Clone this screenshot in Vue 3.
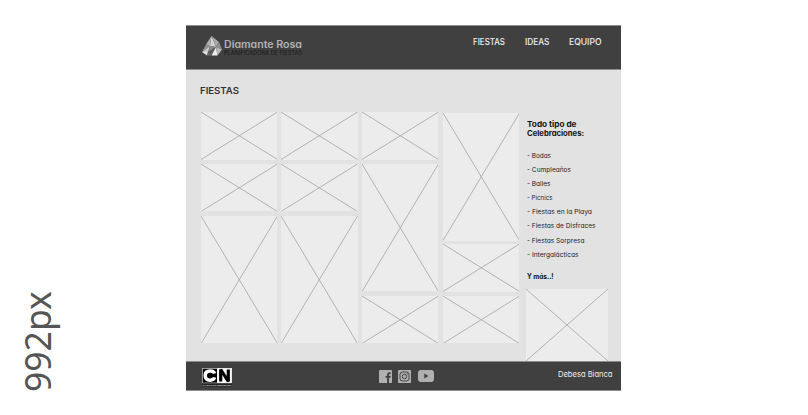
<script setup>
import { h } from 'vue'

// A single line of text fitted to a given width.
const FitText = (props) =>
  h('svg', { class: 'fit', width: props.w, height: props.lh }, [
    h(
      'text',
      { x: 0, y: props.base, textLength: props.w, lengthAdjust: 'spacingAndGlyphs' },
      props.t
    )
  ])
FitText.props = ['t', 'w', 'lh', 'base']

const nav = [
  { t: 'FIESTAS', w: 32 },
  { t: 'IDEAS', w: 24.5 },
  { t: 'EQUIPO', w: 32.5 }
]

const columns = [
  ['short', 'short', 'tall'],
  ['short', 'short', 'tall'],
  ['short', 'tall', 'short'],
  ['tall', 'short', 'short']
]

const items = [
  { t: '- Bodas', w: 24 },
  { t: '- Cumpleaños', w: 44 },
  { t: '- Bailes', w: 23.5 },
  { t: '- Picnics', w: 25.5 },
  { t: '- Fiestas en la Playa', w: 65 },
  { t: '- Fiestas de Disfraces', w: 68.5 },
  { t: '- Fiestas Sorpresa', w: 57.5 },
  { t: '- Intergalácticas', w: 51.5 }
]
</script>

<template>
  <div class="board">
    <div class="size">992px</div>
    <div class="page">
      <header class="header">
        <div class="brand">
          <svg class="gem" width="20" height="20" viewBox="0 0 20 20">
            <path d="M9.500 0 4 8.500 8 10Z" fill="#b0b0b0" />
            <path d="M9.500 0 8 10 14 11Z" fill="#d2d2d2" />
            <path d="M9.500 0 17 6 14 11Z" fill="#a8a8a8" />
            <path d="M4 8.500 0 16 8 10Z" fill="#929292" />
            <path d="M8 10 0 16 6 16Z" fill="#c9c9c9" />
            <path d="M0 16 6 16 5 19.500Z" fill="#e4e4e4" />
            <path d="M8 10 6 16 14 11Z" fill="#8a8a8a" />
            <path d="M6 16 5 19.500 9.500 19.500Z" fill="#6c6c6c" />
            <path d="M6 16 14 11 9.500 19.500Z" fill="#5c5c5c" />
            <path d="M14 11 9.500 19.500 15.500 19.500Z" fill="#ececec" />
            <path d="M17 6 14 11 20 13.500Z" fill="#8f8f8f" />
            <path d="M14 11 20 13.500 15.500 19.500Z" fill="#b9b9b9" />
          </svg>
          <div class="names">
            <FitText class="name" t="Diamante Rosa" :w="78" :lh="12" :base="9.7" />
            <FitText class="tagline" t="PLANIFICADORA DE FIESTAS" :w="78" :lh="7" :base="5.3" />
          </div>
        </div>
        <nav class="nav">
          <FitText v-for="n in nav" :key="n.t" :t="n.t" :w="n.w" :lh="10" :base="8" />
        </nav>
      </header>

      <main class="main">
        <section class="gallery">
          <h1 class="title"><FitText t="FIESTAS" :w="39" :lh="12" :base="9" /></h1>
          <div class="columns">
            <div v-for="(col, c) in columns" :key="c" class="column">
              <svg v-for="(kind, i) in col" :key="i" class="box" :class="kind" viewBox="0 0 100 100" preserveAspectRatio="none">
                <path d="M0 0 100 100M100 0 0 100" vector-effect="non-scaling-stroke" />
              </svg>
            </div>
          </div>
        </section>

        <aside class="aside">
          <h2 class="subtitle">
            <FitText t="Todo tipo de" :w="49.5" :lh="8.5" :base="7" />
            <FitText t="Celebraciones:" :w="57" :lh="8.5" :base="7" />
          </h2>
          <ul class="list">
            <li v-for="it in items" :key="it.t"><FitText :t="it.t" :w="it.w" :lh="10" :base="7" /></li>
          </ul>
          <p class="more"><FitText t="Y más..!" :w="26.5" :lh="10" :base="7" /></p>
          <svg class="box promo" viewBox="0 0 100 100" preserveAspectRatio="none">
            <path d="M0 0 100 100M100 0 0 100" vector-effect="non-scaling-stroke" />
          </svg>
        </aside>
      </main>

      <footer class="footer">
        <svg class="cn" width="30" height="20" viewBox="0 0 30 20">
          <rect width="15" height="15" fill="#000" />
          <rect x="15" width="15" height="15" fill="#fff" />
          <path d="M12.600 5.600C12 3.600 10.300 2.900 8.100 2.900 4.800 2.900 3.200 4.900 3.200 7.600 3.200 10.300 4.800 12.200 8.100 12.200 10.400 12.200 12.100 11.300 12.600 9.400" fill="none" stroke="#fff" stroke-width="3.500" />
          <path d="M18.700 13.500V1.500L26.300 13.500V1.500" fill="none" stroke="#000" stroke-width="3.200" stroke-linejoin="bevel" />
          <path d="M.5 0V15H29.500V.5H.5" fill="none" stroke="#d8d8d8" stroke-width=".7" />
          <rect y="15.500" width="30" height="3" fill="#222" />
          <text x="0.500" y="18" textLength="29" lengthAdjust="spacingAndGlyphs">CARTOON NETWORK</text>
        </svg>
        <div class="social">
          <svg width="13" height="13" viewBox="0 0 13 13">
            <rect width="13" height="13" rx=".8" fill="#b0b0b0" />
            <path d="M8.100 13V7.800H6.500V6H8.100V4.700C8.100 3 9 2.200 10.500 2.200H11.700V4H10.900C10.200 4 10 4.300 10 4.900V6H11.700L11.500 7.800H10V13Z" fill="#404040" />
          </svg>
          <svg width="13" height="13" viewBox="0 0 13 13">
            <rect width="13" height="13" rx=".8" fill="#b0b0b0" />
            <rect x="2" y="2" width="9" height="9" rx="2.500" fill="none" stroke="#404040" />
            <circle cx="6.500" cy="6.500" r="2.200" fill="none" stroke="#404040" />
            <circle cx="9.100" cy="3.900" r=".6" fill="#404040" />
          </svg>
          <svg width="16" height="12" viewBox="0 0 16 12">
            <rect width="16" height="12" rx="3" fill="#b0b0b0" />
            <path d="M6.300 3.600V8.400L10.400 6Z" fill="#404040" />
          </svg>
        </div>
        <FitText class="author" t="Debesa Bianca" :w="54.5" :lh="12" :base="8.5" />
      </footer>
    </div>
  </div>
</template>

<style>
body {
  background: #fff;
}
.fit {
  display: block;
  overflow: visible;
  fill: currentColor;
}
</style>

<style scoped>
.board {
  display: flex;
  height: 415px;
  box-sizing: border-box;
  padding: 25px 0 0 13px;
  font-family: Inter, Lato, sans-serif;
  font-feature-settings: 'cv11';
}
.size {
  width: 48px;
  margin-right: 125px;
  height: 367px;
  writing-mode: vertical-rl;
  transform: rotate(180deg);
  font: 35.500px/48px 'Noto Sans', sans-serif;
  color: #555;
}
.page {
  width: 434.500px;
  height: 366px;
  display: flex;
  flex-direction: column;
  background: #e2e2e2;
}
.header {
  height: 45px;
  box-sizing: border-box;
  flex: none;
  display: flex;
  justify-content: space-between;
  padding: 10px 19.500px 0 16px;
  background: #404040;
  border-top: 1px solid #8d8d8d;
  border-bottom: 1px solid #8d8d8d;
}
.brand {
  display: flex;
  gap: 2px;
}
.names {
  padding-top: 2px;
}
.name {
  font-size: 9.800px;
  font-weight: 600;
  color: #b2b2b2;
}
.tagline {
  font-size: 5.800px;
  color: #1a1a1a;
}
.nav {
  display: flex;
  gap: 19.500px;
  padding-top: 1px;
  font-size: 8.500px;
  font-weight: 500;
  color: #f0f0f0;
}
.main {
  flex: 1;
  min-height: 0;
  display: flex;
}
.gallery {
  width: 318px;
  padding: 15px 7px 0 14.500px;
}
.title {
  margin: 0 0 15px -1px;
  font-size: 9.300px;
  font-weight: 600;
  color: #333;
}
.columns {
  display: grid;
  grid-template-columns: repeat(4, 76.500px);
  column-gap: 4.200px;
}
.column {
  height: 231px;
  display: flex;
  flex-direction: column;
  justify-content: space-between;
}
.column:last-child {
  height: 230px;
  margin-top: 1px;
}
.box {
  display: block;
  width: 100%;
  background: #ececec;
  fill: none;
  stroke: #a8a8a8;
  stroke-width: 0.850px;
}
.short {
  height: 47.500px;
}
.tall {
  height: 127.500px;
}
.aside {
  width: 94px;
  padding-top: 50px;
  color: #1c1c1c;
}
.subtitle {
  margin: 0 0 13.500px 1px;
  font-size: 7.400px;
  font-weight: 700;
  color: #111;
}
.list {
  list-style: none;
  margin: 0 0 0 1px;
  padding: 0;
  display: grid;
  grid-auto-rows: 14.200px;
  font-size: 6.500px;
}
.more {
  margin: 7.500px 0 7.300px 1px;
  font-size: 7px;
  font-weight: 700;
  color: #111;
}
.promo {
  width: 82px;
  height: 72px;
}
.footer {
  height: 30px;
  flex: none;
  box-sizing: border-box;
  display: grid;
  grid-template-columns: 1fr auto 1fr;
  padding: 6px 8.500px 0 15.500px;
  background: #404040;
  border-top: 1px solid #8d8d8d;
  border-bottom: 1px solid #8d8d8d;
}
.cn {
  margin-left: 0.500px;
}
.cn text {
  font: 700 2.500px 'Liberation Sans', sans-serif;
  fill: #ddd;
}
.social {
  display: flex;
  align-items: center;
  gap: 6.500px;
  height: 16px;
  margin-left: -1px;
}
.author {
  justify-self: end;
  font-size: 7.800px;
  color: #eee;
}
</style>
